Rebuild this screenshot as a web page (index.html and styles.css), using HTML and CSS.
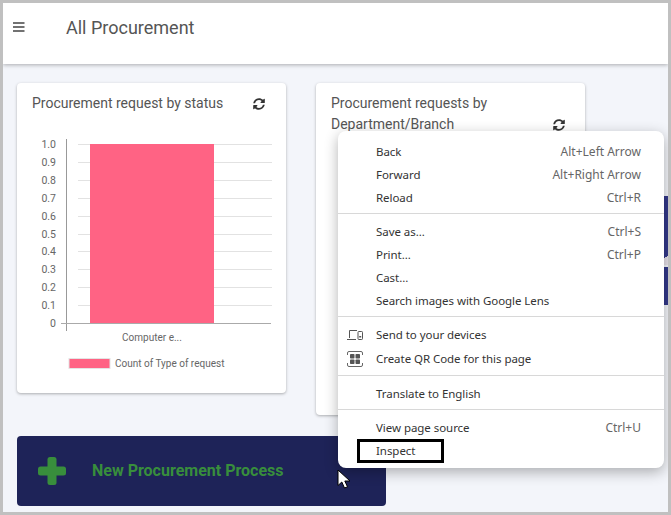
FILE: index.html
```html
<!DOCTYPE html>
<html lang="en">
<head>
    <meta charset="UTF-8">
    <meta name="viewport" content="width=device-width, initial-scale=1.0">
    <title>All Procurement</title>
    <link rel="stylesheet" href="styles.css">
</head>
<body>
    <div class="frame">
        <header class="topbar">
            <svg class="menu-icon" width="12" height="10" viewBox="0 0 12 10"><path d="M0 1h11.5M0 5h11.5M0 9h11.5" stroke="#444" stroke-width="1.6" fill="none"/></svg>
            <h1>All Procurement</h1>
        </header>

        <main class="content">
            <div class="cards">
                <section class="card card-status">
                    <div class="card-head">
                        <h2>Procurement request by status</h2>
                        <svg class="refresh" viewBox="0 0 512 512"><path d="M370.72 133.28C339.458 104.008 298.888 87.962 255.848 88c-77.458.068-144.328 53.178-162.791 126.85-1.344 5.363-6.122 9.15-11.651 9.15H24.103c-7.498 0-13.194-6.807-11.807-14.176C33.933 94.924 134.813 8 256 8c66.448 0 126.791 26.136 171.315 68.685L463.03 40.97C478.149 25.851 504 36.559 504 57.941V192c0 13.255-10.745 24-24 24H345.941c-21.382 0-32.09-25.851-16.971-40.971l41.75-41.749zM32 296h134.059c21.382 0 32.09 25.851 16.971 40.971l-41.75 41.75c31.262 29.273 71.835 45.319 114.876 45.28 77.418-.07 144.315-53.144 162.787-126.849 1.344-5.363 6.122-9.15 11.651-9.15h57.304c7.498 0 13.194 6.807 11.807 14.176C478.067 417.076 377.187 504 256 504c-66.448 0-126.791-26.136-171.315-68.685L48.97 471.03C33.851 486.149 8 475.441 8 454.059V320c0-13.255 10.745-24 24-24z"/></svg>
                    </div>
                    <!-- viewBox origin is the card's top left corner -->
                    <svg class="chart" width="269" height="254" viewBox="0 56 269 254">
                        <g stroke="#e2e2e2" stroke-width="1">
                            <path d="M61 61.5H255M61 79.5H255M61 97.5H255M61 115.5H255M61 133.5H255M61 151.5H255M61 168.5H255M61 186.5H255M61 204.5H255M61 222.5H255"/>
                        </g>
                        <rect x="73" y="61" width="124" height="179" fill="#ff6384"/>
                        <path d="M49.5 56V248" stroke="#999" fill="none"/>
                        <path d="M44 240.5H254" stroke="#aaa" fill="none"/>
                        <g class="tick" text-anchor="end">
                            <text x="39" y="65">1.0</text>
                            <text x="39" y="83">0.9</text>
                            <text x="39" y="101">0.8</text>
                            <text x="39" y="119">0.7</text>
                            <text x="39" y="137">0.6</text>
                            <text x="39" y="155">0.5</text>
                            <text x="39" y="172">0.4</text>
                            <text x="39" y="190">0.3</text>
                            <text x="39" y="208">0.2</text>
                            <text x="39" y="226">0.1</text>
                            <text x="39" y="244">0</text>
                        </g>
                        <text class="xlabel" x="135" y="258" text-anchor="middle">Computer e...</text>
                        <rect x="52" y="275.5" width="41" height="10" fill="#ff6384" stroke="#e4e4e4"/>
                        <text class="xlabel" x="98" y="284">Count of Type of request</text>
                    </svg>
                </section>

                <section class="card card-dept">
                    <div class="card-head">
                        <h2>Procurement requests by Department/Branch</h2>
                        <svg class="refresh" viewBox="0 0 512 512"><path d="M370.72 133.28C339.458 104.008 298.888 87.962 255.848 88c-77.458.068-144.328 53.178-162.791 126.85-1.344 5.363-6.122 9.15-11.651 9.15H24.103c-7.498 0-13.194-6.807-11.807-14.176C33.933 94.924 134.813 8 256 8c66.448 0 126.791 26.136 171.315 68.685L463.03 40.97C478.149 25.851 504 36.559 504 57.941V192c0 13.255-10.745 24-24 24H345.941c-21.382 0-32.09-25.851-16.971-40.971l41.75-41.749zM32 296h134.059c21.382 0 32.09 25.851 16.971 40.971l-41.75 41.75c31.262 29.273 71.835 45.319 114.876 45.28 77.418-.07 144.315-53.144 162.787-126.849 1.344-5.363 6.122-9.15 11.651-9.15h57.304c7.498 0 13.194 6.807 11.807 14.176C478.067 417.076 377.187 504 256 504c-66.448 0-126.791-26.136-171.315-68.685L48.97 471.03C33.851 486.149 8 475.441 8 454.059V320c0-13.255 10.745-24 24-24z"/></svg>
                    </div>
                </section>

                <div class="side-panel">
                    <div class="side-top"></div>
                    <div class="side-bottom"></div>
                </div>
            </div>

            <button class="new-process" type="button">
                <svg width="28" height="28" viewBox="0 0 28 28" fill="#388e3c"><rect x="9.500" y="0" width="9" height="28" rx="2.500"/><rect x="0" y="9.500" width="28" height="9" rx="2.500"/></svg>
                <span>New Procurement Process</span>
            </button>
        </main>

        <div class="context-menu">
            <div class="item"><span class="slot"></span><span class="label">Back</span><span class="keys">Alt+Left Arrow</span></div>
            <div class="item"><span class="slot"></span><span class="label">Forward</span><span class="keys">Alt+Right Arrow</span></div>
            <div class="item"><span class="slot"></span><span class="label">Reload</span><span class="keys">Ctrl+R</span></div>
            <hr>
            <div class="item"><span class="slot"></span><span class="label">Save as...</span><span class="keys">Ctrl+S</span></div>
            <div class="item"><span class="slot"></span><span class="label">Print...</span><span class="keys">Ctrl+P</span></div>
            <div class="item"><span class="slot"></span><span class="label">Cast...</span></div>
            <div class="item"><span class="slot"></span><span class="label">Search images with Google Lens</span></div>
            <hr>
            <div class="item item-tall">
                <span class="slot">
                    <svg width="16" height="12" viewBox="0 0 16 12" fill="none" stroke="#555"><path d="M2.500 9V1.500H10M0 10.500H9"/><rect x="11" y="2.500" width="4.500" height="8" rx=".8"/><path d="M13.200 7v1.500" stroke-width="2"/></svg>
                </span>
                <span class="label">Send to your devices</span>
            </div>
            <div class="item item-tall">
                <span class="slot">
                    <svg width="16" height="16" viewBox="0 0 16 16"><path d="M.5 4V2A1.500 1.500 0 0 1 2 .5H14A1.500 1.500 0 0 1 15.500 2V4M.5 12V14A1.500 1.500 0 0 0 2 15.500H14A1.500 1.500 0 0 0 15.500 14V12" stroke="#666" fill="none"/><rect x="3" y="3" width="4.500" height="4.500" rx=".8" fill="#555"/><rect x="8.500" y="3" width="4.500" height="4.500" rx=".8" fill="#555"/><rect x="3" y="8.500" width="4.500" height="4.500" rx=".8" fill="#555"/><rect x="8.500" y="8.500" width="4.500" height="4.500" rx=".8" fill="#555"/></svg>
                </span>
                <span class="label">Create QR Code for this page</span>
            </div>
            <hr>
            <div class="item"><span class="slot"></span><span class="label">Translate to English</span></div>
            <hr>
            <div class="item"><span class="slot"></span><span class="label">View page source</span><span class="keys">Ctrl+U</span></div>
            <div class="item item-marked"><span class="slot"></span><span class="label">Inspect</span></div>
        </div>

        <svg class="cursor" width="14" height="20" viewBox="0 0 14 20"><path d="M1 1V16.500L4.800 13L7.500 19L10.500 17.800L7.800 12H13Z" fill="#fff" stroke="#000"/></svg>
    </div>
</body>
</html>
```

FILE: styles.css
```css
* {
    box-sizing: border-box;
}
html, body {
    margin: 0;
    padding: 0;
}
body {
    font-family: Roboto, sans-serif;
    color: #555;
}
.frame {
    position: relative;
    width: 671px;
    height: 515px;
    border: 3px solid #c0c0c0;
    background-color: #f3f5fa;
    overflow: hidden;
}
.topbar {
    display: flex;
    align-items: center;
    height: 61px;
    padding: 0 0 13px 10px;
    background: #fff;
    box-shadow: 0 1px 4px rgba(0, 0, 0, 0.3);
}
.topbar h1 {
    margin: 0 0 0 41px;
    font-size: 18px;
    font-weight: 400;
    color: #555;
}
.menu-icon {
    flex: none;
}
.content {
    padding: 19px 0 0 14px;
}
.cards {
    display: flex;
    align-items: flex-start;
    gap: 30px;
    height: 332px;
}
.card {
    flex: none;
    width: 269px;
    background: #fff;
    border-radius: 4px;
    box-shadow: 0 1px 3px rgba(0, 0, 0, 0.3);
}
.card-status {
    height: 310px;
}
.card-dept {
    height: 332px;
}
.card-head {
    display: flex;
    justify-content: space-between;
    height: 56px;
    padding: 10px 21px 0 15px;
}
.card-head h2 {
    margin: 0;
    font-size: 14px;
    font-weight: 400;
    line-height: 21px;
    color: #555;
}
.card-dept h2 {
    width: 190px;
}
.refresh {
    flex: none;
    width: 12px;
    height: 12px;
    margin-top: 5px;
    fill: #333;
}
.card-dept .refresh {
    margin-top: 26px;
    margin-right: -1px;
}
.chart {
    display: block;
}
.tick text {
    font-size: 10.500px;
    fill: #666;
}
.xlabel {
    font-size: 10px;
    fill: #666;
}
.side-panel {
    flex: none;
    width: 60px;
    margin: 113px 0 0 49px;
}
.side-top {
    height: 69px;
    background: linear-gradient(160deg, #33398a 68%, #e6e0e8 68%, #e6e0e8 80%, #33398a 80%);
}
.side-bottom {
    height: 38px;
    margin-top: 2px;
    background: #33398a;
}
.new-process {
    display: flex;
    align-items: center;
    gap: 26px;
    width: 369px;
    height: 70px;
    margin-top: 21px;
    padding: 0 0 0 21px;
    border: none;
    border-radius: 4px;
    background-color: #1e2358;
    color: #388e3c;
    font-family: Roboto, sans-serif;
    font-size: 16px;
    font-weight: 700;
    cursor: pointer;
}
.new-process span {
    margin-top: -2px;
}
.context-menu {
    position: absolute;
    left: 335px;
    top: 128px;
    width: 326px;
    padding: 9px 0 6px;
    background: #fff;
    border-radius: 8px;
    box-shadow: 0 4px 14px rgba(0, 0, 0, 0.3);
    font-family: "Noto Sans", sans-serif;
    font-size: 12px;
    color: #333;
}
.context-menu hr {
    height: 1px;
    margin: 4px 0 6px;
    border: none;
    background: #d8d8d8;
}
.item {
    position: relative;
    display: flex;
    align-items: center;
    height: 23px;
    padding-right: 23px;
}
.item-tall {
    height: 24px;
    padding-bottom: 1px;
}
.slot {
    display: flex;
    flex: none;
    width: 38px;
    padding-left: 9px;
}
.label {
    flex: 1;
    font-size: 11.500px;
    letter-spacing: -0.05px;
}
.keys {
    color: #666;
}
.item-marked::after {
    content: "";
    position: absolute;
    left: 19px;
    top: 0;
    width: 81px;
    height: 18px;
    border: 3px solid #000;
}
.cursor {
    position: absolute;
    left: 334px;
    top: 466px;
}
```
